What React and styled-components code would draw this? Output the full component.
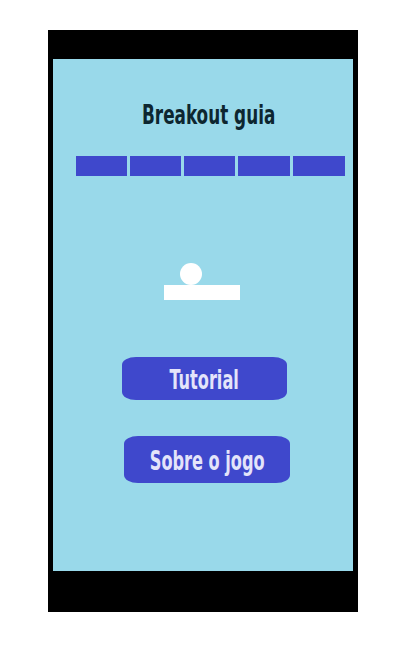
import styled, { createGlobalStyle } from "styled-components";

const GlobalStyle = createGlobalStyle`
    body {
        margin: 0;
        background: #ffffff;
        font-family: "DejaVu Sans Condensed", "Liberation Sans", sans-serif;
    }
`;

const Page = styled.div`
    padding: 30px 0 0 48px;
`;

const Phone = styled.div`
    width: 300px;
    background: #000;
    padding: 29px 5px 41px 5px;
`;

const Screen = styled.div`
    height: 512px;
    background: #99d9ea;
    display: flex;
    flex-direction: column;
`;

const Title = styled.h1`
    margin: 41px 0 3px 89px;
    font-size: 26px;
    line-height: 30px;
    font-weight: 700;
    color: #0d2630;
    white-space: nowrap;
`;

// the screenshot uses a narrow DIN-like face, squeeze the condensed one to match
const Narrow = styled.span`
    display: inline-block;
    transform: scaleX(${(p) => p.sx || 0.69});
    transform-origin: ${(p) => p.origin || "left"} center;
`;

const Bricks = styled.div`
    display: flex;
    gap: 3px;
    margin: 23px 0 0 23px;
`;

const Brick = styled.div`
    width: ${(p) => p.w}px;
    height: 20px;
    background: #3f48cc;
`;

const Ball = styled.div`
    width: 22px;
    height: 22px;
    border-radius: 50%;
    background: #fff;
    margin: 87px 0 0 127px;
`;

const Paddle = styled.div`
    width: 76px;
    height: 15px;
    background: #fff;
    margin-left: 111px;
`;

const Button = styled.button`
    width: ${(p) => p.w}px;
    height: ${(p) => p.h}px;
    margin: ${(p) => p.top}px 0 0 ${(p) => p.left}px;
    border: none;
    border-radius: 14px / 8px;
    background: #3f48cc;
    color: #e4e4fa;
    font-family: inherit;
    font-size: 26px;
    font-weight: 700;
    white-space: nowrap;
    padding: 2px 0 0;
    display: flex;
    align-items: center;
    justify-content: center;
`;

const widths = [51, 51, 51, 52, 52];

export default function App() {
    return (
        <Page>
            <GlobalStyle />
            <Phone>
                <Screen>
                    <Title>
                        <Narrow sx={0.72}>Breakout guia</Narrow>
                    </Title>
                    <Bricks>
                        {widths.map((w, i) => (
                            <Brick key={i} w={w} />
                        ))}
                    </Bricks>
                    <Ball />
                    <Paddle />
                    <Button w={165} h={43} top={57} left={69}>
                        <Narrow origin="center">Tutorial</Narrow>
                    </Button>
                    <Button w={166} h={47} top={36} left={71}>
                        <Narrow origin="center">Sobre o jogo</Narrow>
                    </Button>
                </Screen>
            </Phone>
        </Page>
    );
}
